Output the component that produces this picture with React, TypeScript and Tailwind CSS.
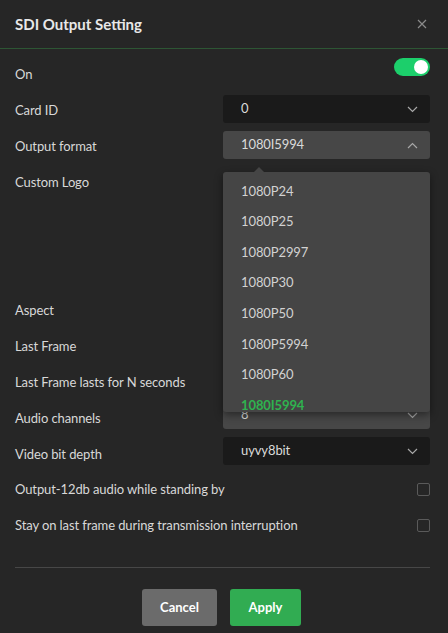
import { useState } from "react"

const formats = ["1080P24", "1080P25", "1080P2997", "1080P30", "1080P50", "1080P5994", "1080P60", "1080I5994"]

const Chevron = ({ up }: { up?: boolean }) => (
  <svg width="11" height="7" viewBox="0 0 11 7" className="text-[#a8a8a8]">
    <path d={up ? "M1 6L5.5 1.5L10 6" : "M1 1L5.5 5.5L10 1"} fill="none" stroke="currentColor" strokeWidth="1.2" />
  </svg>
)

const Select = ({ value, light, up }: { value: string; light?: boolean; up?: boolean }) => (
  <div
    className={`w-[207px] h-[28px] rounded-[3px] flex items-center justify-between pl-[18px] pr-[12px] text-[#dadada] ${
      light ? "bg-[#474747]" : "bg-[#1a1a1a]"
    }`}
  >
    <span>{value}</span>
    <Chevron up={up} />
  </div>
)

const Row = ({ label, children }: { label: string; children?: React.ReactNode }) => (
  <div className="flex items-start justify-between h-[28px]">
    <span className="leading-[28px] pt-px">{label}</span>
    {children}
  </div>
)

const Check = () => <div className="w-[13px] h-[13px] rounded-[2px] border border-[#5a5a5a]" />

export default function App() {
  const [on, setOn] = useState(true)

  return (
    <div
      className="w-[448px] h-[633px] bg-[#262626] text-[#d8d8d8] text-[13px] tracking-[-0.1px] relative"
      style={{ fontFamily: 'Lato, "Noto Sans", sans-serif' }}
    >
      <div className="h-[49px] pl-[15px] pr-[18px] flex items-center justify-between border-b border-[#2d5634]">
        <h1 className="font-bold text-[15px] tracking-normal text-[#e8e8e8]">SDI Output Setting</h1>
        <svg width="10" height="10" viewBox="0 0 10 10" className="text-[#8a8a8a] mr-[3px]">
          <path d="M1 1L9 9M9 1L1 9" stroke="currentColor" strokeWidth="1.2" />
        </svg>
      </div>

      <div className="pl-[15px] pr-[18px] pt-[10px] flex flex-col gap-[8px]">
        <div className="flex items-start justify-between h-[28px]">
          <span className="leading-[28px] pt-px">On</span>
          <button
            onClick={() => setOn(!on)}
            className={`mt-[-1px] w-[36px] h-[18px] rounded-full flex items-center px-[2px] ${
              on ? "bg-[#1ccf6b] justify-end" : "bg-[#555] justify-start"
            }`}
          >
            <span className="w-[14px] h-[14px] rounded-full bg-white" />
          </button>
        </div>

        <Row label="Card ID">
          <Select value="0" />
        </Row>

        <div className="relative">
          <Row label="Output format">
            <Select value="1080I5994" light up />
          </Row>
          <div className="absolute left-[208px] top-[41px] w-[207px] z-10">
            <div className="absolute left-[30px] top-[-5px] w-0 h-0 border-x-[6px] border-x-transparent border-b-[6px] border-b-[#454545]" />
            <div className="h-[240px] overflow-hidden rounded-[3px] bg-[#454545] shadow-[0_3px_8px_rgba(0,0,0,0.45)] pt-[2px]">
              {formats.map((f) => (
                <div
                  key={f}
                  className={`h-[30.6px] flex items-center pl-[18px] pt-[4px] ${
                    f === "1080I5994" ? "text-[#2fb34f] font-bold" : "text-[#d2d2d2]"
                  }`}
                >
                  {f}
                </div>
              ))}
            </div>
          </div>
        </div>

        <div className="h-[120px] flex items-start justify-between">
          <span className="leading-[28px] pt-px">Custom Logo</span>
        </div>

        <Row label="Aspect" />
        <Row label="Last Frame" />
        <Row label="Last Frame lasts for N seconds" />
        <Row label="Audio channels">
          <div className="mt-[-2px]">
            <Select value="8" light />
          </div>
        </Row>
        <Row label="Video bit depth">
          <div className="mt-[-2px]">
            <Select value="uyvy8bit" />
          </div>
        </Row>

        <div className="flex items-center justify-between h-[28px]">
          <span className="pt-px">Output-12db audio while standing by</span>
          <Check />
        </div>
        <div className="flex items-center justify-between h-[28px]">
          <span className="pt-px">Stay on last frame during transmission interruption</span>
          <Check />
        </div>

        <div className="mt-[20px] border-t border-[#474747]" />

        <div className="flex justify-center gap-[13px] pt-[13px] pr-[2px]">
          <button className="w-[75px] h-[37px] rounded-[3px] bg-[#6b6b6b] text-white font-bold tracking-normal">Cancel</button>
          <button className="w-[71px] h-[37px] rounded-[3px] bg-[#31ac52] text-white font-bold tracking-normal">Apply</button>
        </div>
      </div>
    </div>
  )
}
